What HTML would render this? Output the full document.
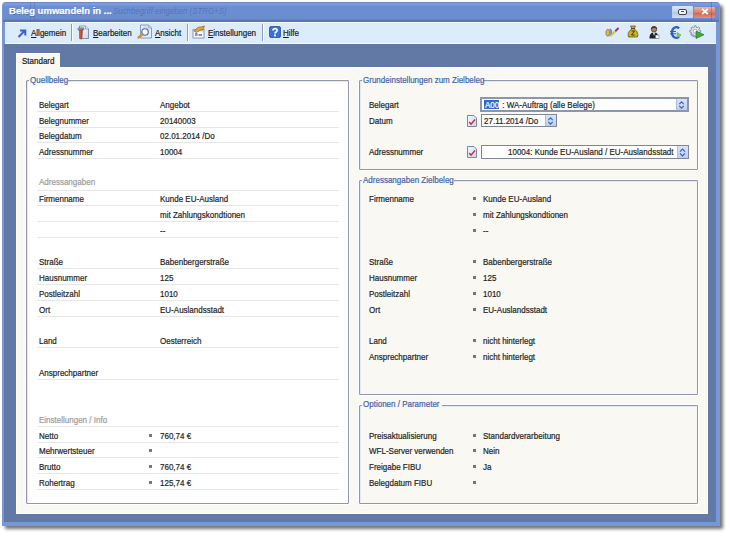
<!DOCTYPE html>
<html><head><meta charset="utf-8"><style>
html,body{margin:0;padding:0;}
body{width:730px;height:536px;overflow:hidden;position:relative;background:#ffffff;font-family:"Liberation Sans",sans-serif;}
.t{position:absolute;white-space:pre;line-height:1;font-family:"Liberation Sans",sans-serif;transform:scaleX(0.91);transform-origin:0 0;-webkit-text-stroke:0.2px currentColor}
u{text-decoration:underline;text-underline-offset:1px}
</style></head><body>
<div style="position:absolute;left:2px;top:2px;width:718px;height:524px;background:#7798d8;box-shadow:3px 3px 3.5px rgba(0,0,0,0.55);border-radius:4px 4px 0 0"></div>
<div style="position:absolute;left:3px;top:2px;width:716px;height:20px;background:linear-gradient(#6f88c4 0px,#6f88c4 1px,#7c9ce0 1px,#7a9ade 3px,#6c8ed2 4px,#6b8ed2 17px,#6079b6 18px,#5d76b0 20px);border-radius:3px 3px 0 0"></div>
<div style="position:absolute;left:30px;top:2px;width:1px;height:19px;background:rgba(50,70,150,0.22)"></div>
<div style="position:absolute;left:34px;top:2px;width:1px;height:19px;background:rgba(50,70,150,0.2)"></div>
<div style="position:absolute;left:4px;top:44px;width:712px;height:478px;background:#6379a5"></div>
<div style="position:absolute;left:5px;top:22px;width:711px;height:22px;background:#ddecfb;border-top:1px solid #f2fbff;border-bottom:1px solid #f5fbff;box-sizing:border-box;box-shadow:0 -1px 0 #5d74aa"></div>
<div class="t" style="left:8.8px;top:5.6px;color:#ffffff;font-size:9.9px;font-weight:bold;transform:scaleX(0.965);-webkit-text-stroke:0.25px #ffffff;text-shadow:0.5px 0.5px 0.5px rgba(30,50,110,0.5)">Beleg umwandeln in ...</div>
<div class="t" style="left:112.5px;top:7.43px;color:rgba(60,80,140,0.45);font-size:8.8px;font-weight:normal;font-style:italic;-webkit-text-stroke:0;transform:scaleX(0.895)">Suchbegriff eingeben (STRG+S)</div>
<div style="position:absolute;left:672px;top:6px;width:21px;height:11.5px;background:linear-gradient(#d8e6f8,#c4d4ec 45%,#b8c8e0 55%,#d0def2);border-radius:1px"></div>
<div style="position:absolute;left:677.5px;top:8.5px;width:9px;height:6.5px;border:1.3px solid #3e4250;border-radius:2px;box-sizing:border-box;background:#f4f6fb"></div>
<div style="position:absolute;left:680.5px;top:10.8px;width:3px;height:1.5px;background:#555"></div>
<div style="position:absolute;left:694px;top:6.5px;width:21px;height:11px;background:linear-gradient(#eab0a2,#dc8a78 40%,#cf6c58 60%,#e0907e);border-radius:1px"></div>
<svg style="position:absolute;left:701px;top:8px" width="8" height="7" viewBox="0 0 8 7"><path d="M1.2 0.8 L6.8 6.2 M6.8 0.8 L1.2 6.2" stroke="#fff" stroke-width="1.8"/></svg>
<div style="position:absolute;left:711px;top:2px;width:1px;height:19px;background:rgba(50,70,150,0.3)"></div>
<div style="position:absolute;left:71px;top:24px;width:1px;height:17px;background:#8c9bb5;box-shadow:1px 0 0 #ffffff"></div>
<div style="position:absolute;left:187px;top:24px;width:1px;height:17px;background:#8c9bb5;box-shadow:1px 0 0 #ffffff"></div>
<div style="position:absolute;left:262px;top:24px;width:1px;height:17px;background:#8c9bb5;box-shadow:1px 0 0 #ffffff"></div>
<div class="t" style="left:31px;top:28.73px;color:#1a1a1a;font-size:8.8px;font-weight:normal;"><u>A</u>llgemein</div>
<div class="t" style="left:93px;top:28.73px;color:#1a1a1a;font-size:8.8px;font-weight:normal;"><u>B</u>earbeiten</div>
<div class="t" style="left:155px;top:28.73px;color:#1a1a1a;font-size:8.8px;font-weight:normal;"><u>A</u>nsicht</div>
<div class="t" style="left:208px;top:28.73px;color:#1a1a1a;font-size:8.8px;font-weight:normal;"><u>E</u>instellungen</div>
<div class="t" style="left:283.3px;top:28.73px;color:#1a1a1a;font-size:8.8px;font-weight:normal;"><u>H</u>ilfe</div>
<svg style="position:absolute;left:17px;top:29px" width="10" height="9" viewBox="0 0 10 9"><path d="M1.5 8 L8 1.5 M3 1.5 H8.3 V6.5" stroke="#3a62c8" stroke-width="2" fill="none"/></svg>
<svg style="position:absolute;left:77px;top:25px" width="13" height="15" viewBox="0 0 26 30">
<defs><linearGradient id="bdoc" x1="0" y1="0" x2="1" y2="1"><stop offset="0" stop-color="#ffffff"/><stop offset="1" stop-color="#c8d4f0"/></linearGradient>
<linearGradient id="bham" x1="0" y1="0" x2="1" y2="0"><stop offset="0" stop-color="#f07848"/><stop offset="1" stop-color="#a02810"/></linearGradient></defs>
<path d="M5 2 H17 L23 8 V27 H5 Z" fill="url(#bdoc)" stroke="#6f7d98" stroke-width="1.6"/>
<path d="M17 2 V8 H23" fill="#e8eef8" stroke="#6f7d98" stroke-width="1.2"/>
<path d="M1.5 7 C3 5 8 5 14 6 L13.5 10 C9 9 5 9 3 11 Z" fill="#9098a8" stroke="#505868" stroke-width="1"/>
<path d="M5.5 10 L11 9.5 L10 27 C9.5 29 6.5 29 6 27 Z" fill="url(#bham)" stroke="#7a2a10" stroke-width="0.8"/>
</svg>
<svg style="position:absolute;left:136px;top:24px" width="18" height="15" viewBox="0 0 36 30">
<path d="M9 2 H25 L31 8 V28 H9 Z" fill="#e4ecf8" stroke="#7f92b8" stroke-width="1.8"/>
<path d="M25 2 V8 H31" fill="none" stroke="#7f92b8" stroke-width="1.2"/>
<path d="M14 9 L19 5 L24 9 V15 H14 Z" fill="none" stroke="#a8b8d4" stroke-width="1.5"/>
<circle cx="18" cy="16" r="6.5" fill="#f4f8ff" stroke="#5c6f98" stroke-width="2.4"/>
<path d="M13 21 L5 27" stroke="#c89050" stroke-width="4.5" stroke-linecap="round"/>
</svg>
<svg style="position:absolute;left:192px;top:25px" width="14" height="14" viewBox="0 0 28 28">
<rect x="2" y="9" width="22" height="17" fill="#f6f9fd" stroke="#7a90b8" stroke-width="1.8"/>
<rect x="2" y="9" width="22" height="3.5" fill="#9fb4d8"/>
<rect x="6" y="16" width="5" height="6" fill="#7a94c8"/><rect x="13" y="18" width="7" height="4" fill="#7a94c8"/>
<path d="M5 13 C7 7 12 4 17 4 L25 2 L23 8 C18 9 13 12 9 15 Z" fill="#e8a820" stroke="#8a5a08" stroke-width="1.2"/>
</svg>
<svg style="position:absolute;left:268.5px;top:26px" width="12" height="12" viewBox="0 0 24 24">
<rect x="1" y="1" width="22" height="22" rx="3" fill="#3b6fd4" stroke="#2a50a8" stroke-width="1.6"/>
<path d="M7.8 8.8 C7.8 4.2 16.2 4.2 16.2 8.8 C16.2 11.8 12 12.2 12 15.2" stroke="#ffffff" stroke-width="3.4" fill="none"/>
<rect x="10.1" y="17" width="3.8" height="3.8" fill="#ffffff"/>
</svg>
<svg style="position:absolute;left:605px;top:27px" width="14" height="10" viewBox="0 0 28 20">
<path d="M2 14 C1 7 5 2 8 6 C10 9 9 15 7 18 C5 19 3 18 2 14 Z" fill="#e8b848" stroke="#6a5020" stroke-width="1.2"/>
<path d="M9 5 C12 3 14 6 13 12 C12 16 11 18 9 18" fill="#6a9ad8" stroke="#3a5a90" stroke-width="1.2"/>
<path d="M11 18 L24 5" stroke="#d8c040" stroke-width="4"/>
<path d="M22 7 L26 3" stroke="#8a3a78" stroke-width="4" stroke-linecap="round"/>
</svg>
<svg style="position:absolute;left:627px;top:25px" width="12" height="13" viewBox="0 0 24 26">
<path d="M7 2 L17 2 L14 8 C21 11 23 19 21 24 H3 C1 19 3 11 10 8 Z" fill="#c8b030" stroke="#5a4a08" stroke-width="1.4"/>
<path d="M8 7 H16" stroke="#4a3a08" stroke-width="1.6"/>
<path d="M9 12 H15 L9 20 H15" stroke="#4a3a08" stroke-width="2" fill="none"/>
</svg>
<svg style="position:absolute;left:649px;top:25px" width="11" height="14" viewBox="0 0 22 28">
<circle cx="10" cy="8.5" r="5.5" fill="#a88262" stroke="#3a2a20" stroke-width="1.2"/>
<path d="M3.8 9 C3 0 17 0 16.2 9 C15 5 6 5 3.8 9 Z" fill="#4a3422"/>
<path d="M1 27 C1 17 5 15 10 15 C15 15 19 17 19 27 Z" fill="#222222"/>
<path d="M8 15 L10 22 L12 15 Z" fill="#ffffff"/>
<rect x="13" y="20" width="7" height="7" fill="#ffffff" stroke="#666" stroke-width="1"/>
</svg>
<svg style="position:absolute;left:670px;top:26px" width="12" height="13" viewBox="0 0 24 26">
<path d="M18 5 C14 0 4 2 4 13 C4 24 14 26 18 21" stroke="#2d5ec8" stroke-width="4.6" fill="none"/>
<path d="M0 11 H12 M0 15.5 H12" stroke="#2d5ec8" stroke-width="2.2"/>
<path d="M14 13 L22 18 L14 24 Z" fill="#90d040" stroke="#509020" stroke-width="1"/>
</svg>
<svg style="position:absolute;left:689px;top:25px" width="16" height="14" viewBox="0 0 32 28">
<path d="M20.20 10.32 L23.38 10.85 L23.38 14.15 L20.20 14.68 L19.49 16.40 L21.36 19.02 L19.02 21.36 L16.40 19.49 L14.68 20.20 L14.15 23.38 L10.85 23.38 L10.32 20.20 L8.60 19.49 L5.98 21.36 L3.64 19.02 L5.51 16.40 L4.80 14.68 L1.62 14.15 L1.62 10.85 L4.80 10.32 L5.51 8.60 L3.64 5.98 L5.98 3.64 L8.60 5.51 L10.32 4.80 L10.85 1.62 L14.15 1.62 L14.68 4.80 L16.40 5.51 L19.02 3.64 L21.36 5.98 L19.49 8.60 Z" fill="#e4e8ee" stroke="#7a8088" stroke-width="1.6"/>
<circle cx="12.5" cy="12.5" r="4" fill="#ffffff" stroke="#8a9098" stroke-width="1.4"/>
<path d="M4 16 C5 20 8 23 12 23" stroke="#8aa0d0" stroke-width="3" fill="none"/>
<path d="M14 12 L30 19.5 L14 27 Z" fill="#3cac3c" stroke="#1a6a1a" stroke-width="1.2"/>
</svg>
<div style="position:absolute;left:16px;top:53px;width:44px;height:15px;background:#f9f8f3;border-left:1px solid #ffffff;border-top:1px solid #ffffff;box-sizing:border-box"></div>
<div class="t" style="left:22px;top:57.03px;color:#141414;font-size:8.8px;font-weight:normal;">Standard</div>
<div style="position:absolute;left:16px;top:67px;width:692px;height:447px;background:#f9f8f3;border:1px solid #ffffff;box-sizing:border-box"></div>
<div style="position:absolute;left:17px;top:67px;width:43px;height:1px;background:#f9f8f3"></div>
<div style="position:absolute;left:26px;top:80px;width:323px;height:423.5px;border:1px solid #9096ad;border-radius:1px;box-sizing:border-box;background:#ffffff;box-shadow:inset 1px 1px 0 #e2e9f6, 1px 1px 0 #ffffff, -1px -1px 0 #ffffff"></div>
<div style="position:absolute;left:29px;top:76px;width:39.4px;height:8px;background:#f9f8f3"></div>
<div class="t" style="left:30px;top:76.43px;color:#4262a8;font-size:8.8px;font-weight:normal;">Quellbeleg</div>
<div style="position:absolute;left:358.5px;top:80px;width:339px;height:90px;border:1px solid #9096ad;border-radius:1px;box-sizing:border-box;background:#f9f8f3;box-shadow:inset 1px 1px 0 #e2e9f6, 1px 1px 0 #ffffff, -1px -1px 0 #ffffff"></div>
<div style="position:absolute;left:361.5px;top:76px;width:121.5px;height:8px;background:#f9f8f3"></div>
<div class="t" style="left:362.5px;top:76.43px;color:#4262a8;font-size:8.8px;font-weight:normal;">Grundeinstellungen zum Zielbeleg</div>
<div style="position:absolute;left:358.5px;top:180px;width:339px;height:214.5px;border:1px solid #9096ad;border-radius:1px;box-sizing:border-box;background:#f9f8f3;box-shadow:inset 1px 1px 0 #e2e9f6, 1px 1px 0 #ffffff, -1px -1px 0 #ffffff"></div>
<div style="position:absolute;left:361.5px;top:176px;width:92.4px;height:8px;background:#f9f8f3"></div>
<div class="t" style="left:362.5px;top:176.43px;color:#4262a8;font-size:8.8px;font-weight:normal;">Adressangaben Zielbeleg</div>
<div style="position:absolute;left:358.5px;top:405px;width:339px;height:98.5px;border:1px solid #9096ad;border-radius:1px;box-sizing:border-box;background:#f9f8f3;box-shadow:inset 1px 1px 0 #e2e9f6, 1px 1px 0 #ffffff, -1px -1px 0 #ffffff"></div>
<div style="position:absolute;left:361.5px;top:401px;width:80.7px;height:8px;background:#f9f8f3"></div>
<div class="t" style="left:362.5px;top:400.43px;color:#4262a8;font-size:8.8px;font-weight:normal;">Optionen / Parameter</div>
<div style="position:absolute;left:37px;top:110.8px;width:302px;height:1px;background:#e6e6e6"></div>
<div class="t" style="left:38.8px;top:101px;color:#1e1e1e;font-size:8.8px">Belegart</div>
<div class="t" style="left:160px;top:101px;color:#1e1e1e;font-size:8.8px">Angebot</div>
<div style="position:absolute;left:37px;top:126.55px;width:302px;height:1px;background:#e6e6e6"></div>
<div class="t" style="left:38.8px;top:117px;color:#1e1e1e;font-size:8.8px">Belegnummer</div>
<div class="t" style="left:160px;top:117px;color:#1e1e1e;font-size:8.8px">20140003</div>
<div style="position:absolute;left:37px;top:142.3px;width:302px;height:1px;background:#e6e6e6"></div>
<div class="t" style="left:38.8px;top:132px;color:#1e1e1e;font-size:8.8px">Belegdatum</div>
<div class="t" style="left:160px;top:132px;color:#1e1e1e;font-size:8.8px">02.01.2014 /Do</div>
<div style="position:absolute;left:37px;top:158.05px;width:302px;height:1px;background:#e6e6e6"></div>
<div class="t" style="left:38.8px;top:148px;color:#1e1e1e;font-size:8.8px">Adressnummer</div>
<div class="t" style="left:160px;top:148px;color:#1e1e1e;font-size:8.8px">10004</div>
<div style="position:absolute;left:37px;top:189.55px;width:302px;height:1px;background:#e6e6e6"></div>
<div class="t" style="left:38.8px;top:178px;color:#1e1e1e;font-size:8.8px"><span style="color:#9a9a9a">Adressangaben</span></div>
<div style="position:absolute;left:37px;top:205.3px;width:302px;height:1px;background:#e6e6e6"></div>
<div class="t" style="left:38.8px;top:195px;color:#1e1e1e;font-size:8.8px">Firmenname</div>
<div class="t" style="left:160px;top:195px;color:#1e1e1e;font-size:8.8px">Kunde EU-Ausland</div>
<div style="position:absolute;left:37px;top:221.05px;width:302px;height:1px;background:#e6e6e6"></div>
<div class="t" style="left:160px;top:211px;color:#1e1e1e;font-size:8.8px">mit Zahlungskondtionen</div>
<div style="position:absolute;left:37px;top:236.8px;width:302px;height:1px;background:#e6e6e6"></div>
<div class="t" style="left:160px;top:227px;color:#1e1e1e;font-size:8.8px">--</div>
<div style="position:absolute;left:37px;top:268.3px;width:302px;height:1px;background:#e6e6e6"></div>
<div class="t" style="left:38.8px;top:258px;color:#1e1e1e;font-size:8.8px">Straße</div>
<div class="t" style="left:160px;top:258px;color:#1e1e1e;font-size:8.8px">Babenbergerstraße</div>
<div style="position:absolute;left:37px;top:284.05px;width:302px;height:1px;background:#e6e6e6"></div>
<div class="t" style="left:38.8px;top:274px;color:#1e1e1e;font-size:8.8px">Hausnummer</div>
<div class="t" style="left:160px;top:274px;color:#1e1e1e;font-size:8.8px">125</div>
<div style="position:absolute;left:37px;top:299.8px;width:302px;height:1px;background:#e6e6e6"></div>
<div class="t" style="left:38.8px;top:290px;color:#1e1e1e;font-size:8.8px">Postleitzahl</div>
<div class="t" style="left:160px;top:290px;color:#1e1e1e;font-size:8.8px">1010</div>
<div style="position:absolute;left:37px;top:315.55px;width:302px;height:1px;background:#e6e6e6"></div>
<div class="t" style="left:38.8px;top:306px;color:#1e1e1e;font-size:8.8px">Ort</div>
<div class="t" style="left:160px;top:306px;color:#1e1e1e;font-size:8.8px">EU-Auslandsstadt</div>
<div style="position:absolute;left:37px;top:347.05px;width:302px;height:1px;background:#e6e6e6"></div>
<div class="t" style="left:38.8px;top:337px;color:#1e1e1e;font-size:8.8px">Land</div>
<div class="t" style="left:160px;top:337px;color:#1e1e1e;font-size:8.8px">Oesterreich</div>
<div style="position:absolute;left:37px;top:378.55px;width:302px;height:1px;background:#e6e6e6"></div>
<div class="t" style="left:38.8px;top:369px;color:#1e1e1e;font-size:8.8px">Ansprechpartner</div>
<div style="position:absolute;left:37px;top:425.8px;width:302px;height:1px;background:#e6e6e6"></div>
<div class="t" style="left:38.8px;top:416px;color:#1e1e1e;font-size:8.8px"><span style="color:#9a9a9a">Einstellungen / Info</span></div>
<div style="position:absolute;left:37px;top:441.55px;width:302px;height:1px;background:#e6e6e6"></div>
<div class="t" style="left:38.8px;top:432px;color:#1e1e1e;font-size:8.8px">Netto</div>
<div style="position:absolute;left:149px;top:434px;width:3px;height:3px;background:#777777"></div>
<div class="t" style="left:160px;top:432px;color:#1e1e1e;font-size:8.8px">760,74 €</div>
<div style="position:absolute;left:37px;top:457.3px;width:302px;height:1px;background:#e6e6e6"></div>
<div class="t" style="left:38.8px;top:447px;color:#1e1e1e;font-size:8.8px">Mehrwertsteuer</div>
<div style="position:absolute;left:149px;top:449px;width:3px;height:3px;background:#777777"></div>
<div style="position:absolute;left:37px;top:473.05px;width:302px;height:1px;background:#e6e6e6"></div>
<div class="t" style="left:38.8px;top:463px;color:#1e1e1e;font-size:8.8px">Brutto</div>
<div style="position:absolute;left:149px;top:465px;width:3px;height:3px;background:#777777"></div>
<div class="t" style="left:160px;top:463px;color:#1e1e1e;font-size:8.8px">760,74 €</div>
<div style="position:absolute;left:37px;top:488.8px;width:302px;height:1px;background:#e6e6e6"></div>
<div class="t" style="left:38.8px;top:479px;color:#1e1e1e;font-size:8.8px">Rohertrag</div>
<div style="position:absolute;left:149px;top:481px;width:3px;height:3px;background:#777777"></div>
<div class="t" style="left:160px;top:479px;color:#1e1e1e;font-size:8.8px">125,74 €</div>
<div class="t" style="left:368.7px;top:101px;color:#1e1e1e;font-size:8.8px">Belegart</div>
<div class="t" style="left:368.7px;top:117px;color:#1e1e1e;font-size:8.8px">Datum</div>
<div class="t" style="left:368.7px;top:148px;color:#1e1e1e;font-size:8.8px">Adressnummer</div>
<div style="position:absolute;left:480px;top:97px;width:209px;height:15px;background:#fff;border:2px solid #8a96b0;box-sizing:border-box"></div>
<div style="position:absolute;left:676px;top:99px;width:11px;height:11px;background:linear-gradient(#d8e4fb,#bccdf2);border-left:1px solid #b0bedc;box-sizing:border-box"></div>
<svg style="position:absolute;left:678px;top:100.5px" width="7" height="8" viewBox="0 0 7 9"><path d="M1 3.6 L3.5 1 L6 3.6 M1 5.4 L3.5 8 L6 5.4" stroke="#3c5fc0" stroke-width="1.2" fill="none"/></svg>

<div style="position:absolute;left:484px;top:100.2px;width:15px;height:9px;background:#316ac5"></div>
<div class="t" style="left:484.5px;top:101px;color:#ffffff;font-size:8.8px">A00</div>
<div class="t" style="left:499.5px;top:101px;color:#1e1e1e;font-size:8.8px"> : WA-Auftrag (alle Belege)</div>
<div style="position:absolute;left:481px;top:114px;width:76px;height:13px;background:#fff;border:1px solid #7f8698;box-sizing:border-box"></div>
<div style="position:absolute;left:545px;top:115px;width:11px;height:11px;background:linear-gradient(#d8e4fb,#bccdf2);border-left:1px solid #b0bedc;box-sizing:border-box"></div>
<svg style="position:absolute;left:547px;top:116.5px" width="7" height="8" viewBox="0 0 7 9"><path d="M1 3.6 L3.5 1 L6 3.6 M1 5.4 L3.5 8 L6 5.4" stroke="#3c5fc0" stroke-width="1.2" fill="none"/></svg>

<div class="t" style="left:483.6px;top:117px;color:#1e1e1e;font-size:8.8px">27.11.2014 /Do</div>
<div style="position:absolute;left:481px;top:145px;width:208px;height:14px;background:#fff;border:1px solid #7f8698;box-sizing:border-box"></div>
<div style="position:absolute;left:677px;top:146px;width:11px;height:12px;background:linear-gradient(#d8e4fb,#bccdf2);border-left:1px solid #b0bedc;box-sizing:border-box"></div>
<svg style="position:absolute;left:679px;top:147.5px" width="7" height="9" viewBox="0 0 7 9"><path d="M1 3.6 L3.5 1 L6 3.6 M1 5.4 L3.5 8 L6 5.4" stroke="#3c5fc0" stroke-width="1.2" fill="none"/></svg>

<div class="t" style="left:508.3px;top:148px;color:#1e1e1e;font-size:8.8px">10004: Kunde EU-Ausland / EU-Auslandsstadt</div>
<svg style="position:absolute;left:466.8px;top:114.8px" width="10" height="12" viewBox="0 0 10 12">
<defs><linearGradient id="cg" x1="0" y1="0" x2="1" y2="1"><stop offset="0" stop-color="#f4f8ff"/><stop offset="1" stop-color="#c8d6f0"/></linearGradient></defs><path d="M0.5 0.5 H7 L9.5 3 V11.5 H0.5 Z" fill="url(#cg)" stroke="#7a88a8" stroke-width="1"/>
<path d="M2.2 7 L4 9.2 L8 4.5" stroke="#c82828" stroke-width="1.3" fill="none"/>
</svg>
<svg style="position:absolute;left:466.8px;top:146px" width="10" height="12" viewBox="0 0 10 12">
<defs><linearGradient id="cg" x1="0" y1="0" x2="1" y2="1"><stop offset="0" stop-color="#f4f8ff"/><stop offset="1" stop-color="#c8d6f0"/></linearGradient></defs><path d="M0.5 0.5 H7 L9.5 3 V11.5 H0.5 Z" fill="url(#cg)" stroke="#7a88a8" stroke-width="1"/>
<path d="M2.2 7 L4 9.2 L8 4.5" stroke="#c82828" stroke-width="1.3" fill="none"/>
</svg>
<div class="t" style="left:368.7px;top:195px;color:#1e1e1e;font-size:8.8px">Firmenname</div>
<div style="position:absolute;left:473px;top:197px;width:3px;height:3px;background:#777777"></div>
<div class="t" style="left:483.2px;top:195px;color:#1e1e1e;font-size:8.8px">Kunde EU-Ausland</div>
<div style="position:absolute;left:473px;top:213px;width:3px;height:3px;background:#777777"></div>
<div class="t" style="left:483.2px;top:211px;color:#1e1e1e;font-size:8.8px">mit Zahlungskondtionen</div>
<div style="position:absolute;left:473px;top:229px;width:3px;height:3px;background:#777777"></div>
<div class="t" style="left:483.2px;top:227px;color:#1e1e1e;font-size:8.8px">--</div>
<div class="t" style="left:368.7px;top:258px;color:#1e1e1e;font-size:8.8px">Straße</div>
<div style="position:absolute;left:473px;top:260px;width:3px;height:3px;background:#777777"></div>
<div class="t" style="left:483.2px;top:258px;color:#1e1e1e;font-size:8.8px">Babenbergerstraße</div>
<div class="t" style="left:368.7px;top:274px;color:#1e1e1e;font-size:8.8px">Hausnummer</div>
<div style="position:absolute;left:473px;top:276px;width:3px;height:3px;background:#777777"></div>
<div class="t" style="left:483.2px;top:274px;color:#1e1e1e;font-size:8.8px">125</div>
<div class="t" style="left:368.7px;top:290px;color:#1e1e1e;font-size:8.8px">Postleitzahl</div>
<div style="position:absolute;left:473px;top:292px;width:3px;height:3px;background:#777777"></div>
<div class="t" style="left:483.2px;top:290px;color:#1e1e1e;font-size:8.8px">1010</div>
<div class="t" style="left:368.7px;top:306px;color:#1e1e1e;font-size:8.8px">Ort</div>
<div style="position:absolute;left:473px;top:308px;width:3px;height:3px;background:#777777"></div>
<div class="t" style="left:483.2px;top:306px;color:#1e1e1e;font-size:8.8px">EU-Auslandsstadt</div>
<div class="t" style="left:368.7px;top:337px;color:#1e1e1e;font-size:8.8px">Land</div>
<div style="position:absolute;left:473px;top:339px;width:3px;height:3px;background:#777777"></div>
<div class="t" style="left:483.2px;top:337px;color:#1e1e1e;font-size:8.8px">nicht hinterlegt</div>
<div class="t" style="left:368.7px;top:353px;color:#1e1e1e;font-size:8.8px">Ansprechpartner</div>
<div style="position:absolute;left:473px;top:355px;width:3px;height:3px;background:#777777"></div>
<div class="t" style="left:483.2px;top:353px;color:#1e1e1e;font-size:8.8px">nicht hinterlegt</div>
<div class="t" style="left:368.7px;top:432px;color:#1e1e1e;font-size:8.8px">Preisaktualisierung</div>
<div style="position:absolute;left:473px;top:434px;width:3px;height:3px;background:#777777"></div>
<div class="t" style="left:483.2px;top:432px;color:#1e1e1e;font-size:8.8px">Standardverarbeitung</div>
<div class="t" style="left:368.7px;top:447px;color:#1e1e1e;font-size:8.8px">WFL-Server verwenden</div>
<div style="position:absolute;left:473px;top:449px;width:3px;height:3px;background:#777777"></div>
<div class="t" style="left:483.2px;top:447px;color:#1e1e1e;font-size:8.8px">Nein</div>
<div class="t" style="left:368.7px;top:463px;color:#1e1e1e;font-size:8.8px">Freigabe FIBU</div>
<div style="position:absolute;left:473px;top:465px;width:3px;height:3px;background:#777777"></div>
<div class="t" style="left:483.2px;top:463px;color:#1e1e1e;font-size:8.8px">Ja</div>
<div class="t" style="left:368.7px;top:479px;color:#1e1e1e;font-size:8.8px">Belegdatum FIBU</div>
<div style="position:absolute;left:473px;top:481px;width:3px;height:3px;background:#777777"></div>
</body></html>
